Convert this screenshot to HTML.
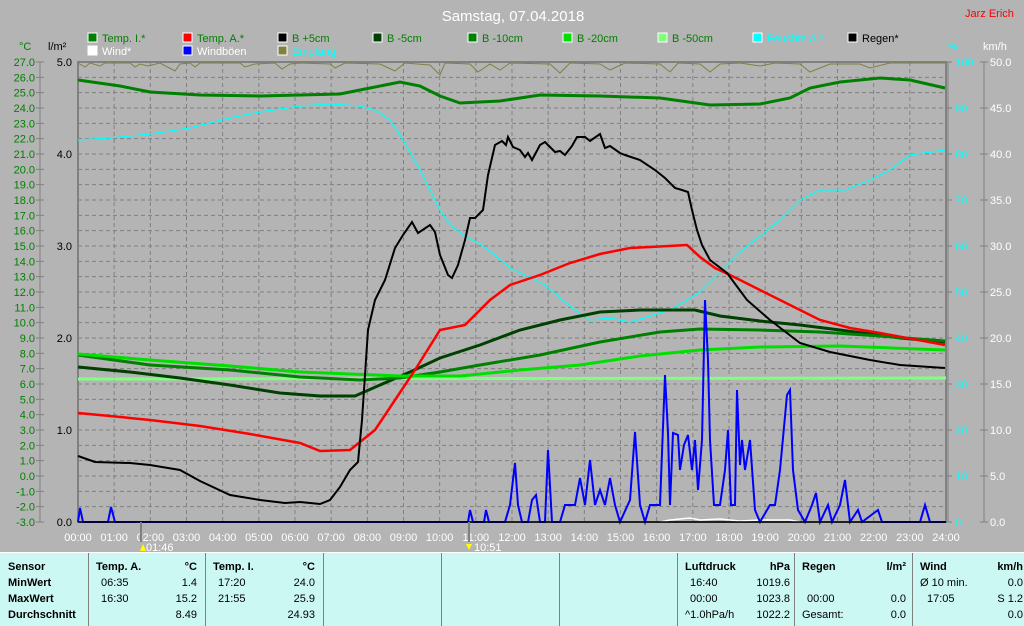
<!DOCTYPE html>
<html><head><meta charset="utf-8"><style>
html,body{margin:0;padding:0;background:#b4b4b4;width:1024px;height:625px;overflow:hidden;font-family:"Liberation Sans",sans-serif}
svg{position:absolute;left:0;top:0}
.tb{position:absolute;left:0;top:552px;width:1024px;height:73px;background:#ccf8f4;border-top:1px solid #fff}
.c{position:absolute;top:0;height:73px;border-left:1px solid #808080;font-size:11px;color:#000}
.r{position:absolute;white-space:nowrap}
b{font-weight:bold}
</style></head><body>
<svg width="1024" height="552" font-family="Liberation Sans, sans-serif" font-size="11">
<text x="513" y="21" fill="#fff" font-size="15" text-anchor="middle">Samstag, 07.04.2018</text>
<text x="965" y="17" fill="#f00" font-size="11">Jarz Erich</text>
<g font-size="11">
<rect x="88" y="33" width="9" height="9" fill="#008000" stroke="#fff"/><text x="102" y="42" fill="#008000">Temp. I.*</text>
<rect x="183" y="33" width="9" height="9" fill="#f00" stroke="#fff"/><text x="197" y="42" fill="#008000">Temp. A.*</text>
<rect x="278" y="33" width="9" height="9" fill="#000" stroke="#fff"/><text x="292" y="42" fill="#008000">B +5cm</text>
<rect x="373" y="33" width="9" height="9" fill="#004000" stroke="#fff"/><text x="387" y="42" fill="#008000">B -5cm</text>
<rect x="468" y="33" width="9" height="9" fill="#008000" stroke="#fff"/><text x="482" y="42" fill="#008000">B -10cm</text>
<rect x="563" y="33" width="9" height="9" fill="#00e000" stroke="#fff"/><text x="577" y="42" fill="#008000">B -20cm</text>
<rect x="658" y="33" width="9" height="9" fill="#80ff80" stroke="#fff"/><text x="672" y="42" fill="#008000">B -50cm</text>
<rect x="753" y="33" width="9" height="9" fill="#0ff" stroke="#fff"/><text x="767" y="42" fill="#0ff">Feuchte A.*</text>
<rect x="848" y="33" width="9" height="9" fill="#000" stroke="#fff"/><text x="862" y="42" fill="#000">Regen*</text>
<rect x="88" y="46" width="9" height="9" fill="#fff" stroke="#fff"/><text x="102" y="55" fill="#fff">Wind*</text>
<rect x="183" y="46" width="9" height="9" fill="#00f" stroke="#fff"/><text x="197" y="55" fill="#fff">Windböen</text>
<rect x="278" y="46" width="9" height="9" fill="#808040" stroke="#fff"/><text x="292" y="55" fill="#0ff">Empfang</text>
</g>
<text x="19" y="50" fill="#008000">°C</text>
<text x="48" y="50" fill="#000">l/m²</text>
<text x="948" y="50" fill="#0ff">%</text>
<text x="983" y="50" fill="#fff">km/h</text>
<line x1="40" y1="62" x2="40" y2="522" stroke="#808080"/>
<g fill="#008000" text-anchor="end" id="cl"></g>
<g stroke="#808080" stroke-dasharray="4,3" id="grid"></g>
<rect x="78" y="62" width="868" height="460" fill="none" stroke="#808080" stroke-width="2"/>
<line x1="948" y1="62" x2="948" y2="522" stroke="#808080"/>
<line x1="984" y1="62" x2="984" y2="522" stroke="#808080"/>
<g id="rl" font-size="11"></g>
<polyline fill="none" stroke="#808040" stroke-width="1" points="78,63 85,67 90,63 100,66 105,63 130,63 135,67 140,64 148,66 160,63 175,71 180,64 190,63 195,67 200,63 240,63 245,67 255,64 275,63 282,69 290,64 300,63 330,64 335,68 345,63 380,64 395,71 405,63 430,65 440,75 445,63 470,64 478,72 490,64 500,70 510,63 550,64 560,73 570,63 600,64 610,70 625,63 660,64 670,72 678,63 700,64 710,72 720,64 740,63 760,66 775,63 800,64 810,72 830,64 860,64 870,68 890,63 946,63"/>
<polyline fill="none" stroke="#80ff80" stroke-width="3" points="78,379 946,378"/>
<polyline fill="none" stroke="#0ff" stroke-width="1.2" points="78,140 110,138 150,134 190,128 230,118 260,112 300,106 330,104 360,106 375,110 390,120 400,135 410,152 420,170 430,190 440,210 450,225 465,236 480,244 495,255 510,268 525,275 545,285 560,298 575,310 590,320 610,318 630,322 650,316 670,310 687,300 700,292 720,272 740,252 760,236 780,220 800,200 820,190 845,190 870,180 890,170 910,155 945,150"/>
<polyline fill="none" stroke="#004000" stroke-width="3" points="78,367 130,372 180,378 230,385 280,393 320,396 355,396 380,385 410,372 440,358 480,345 520,330 560,320 600,312 640,310 695,310 720,316 760,321 800,325 840,330 900,338 945,342"/>
<polyline fill="none" stroke="#008000" stroke-width="3" points="78,355 150,365 230,370 300,377 360,380 400,378 440,372 480,365 540,355 600,342 660,332 700,329 760,330 820,332 880,336 945,341"/>
<polyline fill="none" stroke="#00e000" stroke-width="3" points="78,354 150,360 230,366 300,372 400,376 460,376 520,370 580,365 640,356 700,350 760,347 840,346 945,350"/>
<polyline fill="none" stroke="#008000" stroke-width="3" points="78,80 120,86 150,92 200,95 260,96 340,94 370,88 400,82 420,86 440,96 460,103 500,101 540,95 600,96 660,98 710,105 760,104 790,98 810,88 840,82 880,78 910,80 945,88"/>
<polyline fill="none" stroke="#f00" stroke-width="2.5" points="78,413 110,416 150,420 200,426 250,434 300,443 320,451 350,450 375,430 395,400 415,370 440,330 465,325 490,300 510,285 540,275 570,263 600,254 630,248 650,247 687,245 700,257 715,268 730,275 760,290 790,305 820,320 850,328 880,333 945,345"/>
<polyline fill="none" stroke="#000" stroke-width="2" points="78,456 95,462 130,463 150,465 180,470 200,481 230,495 260,500 285,503 300,502 320,504 330,500 340,487 350,470 358,462 362,420 368,330 375,300 385,280 395,248 403,235 412,222 418,233 430,225 435,232 440,255 448,275 452,278 458,265 465,240 470,218 475,218 483,210 488,175 495,145 502,141 506,145 508,137 513,147 520,150 525,157 528,153 532,160 540,145 545,142 550,147 555,152 560,151 565,155 572,146 577,137 585,137 590,141 600,134 605,148 610,146 620,153 625,155 640,160 655,170 665,178 675,188 682,190 688,192 692,210 697,230 702,245 710,260 727,273 747,300 770,320 800,343 830,352 870,360 900,365 945,368"/>
<polyline fill="none" stroke="#fff" stroke-width="1.5" points="660,522 670,520 680,519 690,518 700,520 720,519 740,521 760,520 790,520 800,522"/>
<polyline fill="none" stroke="#00f" stroke-width="2" points="78,522 80,508 83,522 108,522 111,507 115,522 468,522 470,510 473,522 484,522 486,510 489,522 505,522 510,505 515,463 518,505 522,522 528,522 532,500 536,495 540,522 545,522 548,450 552,522 560,522 565,505 575,505 580,478 585,505 590,460 595,505 600,490 605,505 610,478 615,505 620,522 630,500 635,432 640,505 645,522 650,505 660,505 665,375 668,433 670,505 673,433 678,435 680,470 684,445 688,435 692,470 695,440 698,490 702,440 705,300 708,360 710,440 714,505 720,505 725,470 728,430 731,505 735,505 737,390 740,465 742,440 745,470 750,440 755,510 760,522 770,505 775,505 780,470 787,395 790,390 793,470 798,510 805,522 812,505 816,493 820,522 828,505 832,522 840,505 845,480 850,522 858,510 862,522 878,510 882,522 920,522 925,505 930,522 946,522"/>
<line x1="78" y1="522" x2="946" y2="522" stroke="#000" stroke-width="1.5"/>
<g fill="#fff" text-anchor="middle" id="hl"></g>
<line x1="141" y1="522" x2="141" y2="542" stroke="#808080" stroke-width="2"/>
<line x1="469" y1="522" x2="469" y2="542" stroke="#808080" stroke-width="2"/>
<text x="146" y="551" fill="#fff" font-size="11">01:46</text>
<text x="474" y="551" fill="#fff" font-size="11">10:51</text>
<polygon points="140,551 143,544 146,551" fill="#ff0"/>
<polygon points="466,544 472,544 469,550" fill="#ff0"/>
</svg>
<div class="tb">
<div class="c" style="left:0;border-left:none"><div class="r" style="left:8px;top:8px"><b>Sensor</b></div><div class="r" style="left:8px;top:24px"><b>MinWert</b></div><div class="r" style="left:8px;top:40px"><b>MaxWert</b></div><div class="r" style="left:8px;top:56px"><b>Durchschnitt</b></div></div>
<div class="c" style="left:88px;width:116px"><div class="r" style="left:7px;top:8px"><b>Temp. A.</b></div><div class="r" style="right:8px;top:8px"><b>°C</b></div><div class="r" style="left:12px;top:24px">06:35</div><div class="r" style="right:8px;top:24px">1.4</div><div class="r" style="left:12px;top:40px">16:30</div><div class="r" style="right:8px;top:40px">15.2</div><div class="r" style="right:8px;top:56px">8.49</div></div>
<div class="c" style="left:205px;width:117px"><div class="r" style="left:7px;top:8px"><b>Temp. I.</b></div><div class="r" style="right:8px;top:8px"><b>°C</b></div><div class="r" style="left:12px;top:24px">17:20</div><div class="r" style="right:8px;top:24px">24.0</div><div class="r" style="left:12px;top:40px">21:55</div><div class="r" style="right:8px;top:40px">25.9</div><div class="r" style="right:8px;top:56px">24.93</div></div>
<div class="c" style="left:323px;width:117px"></div>
<div class="c" style="left:441px;width:117px"></div>
<div class="c" style="left:559px;width:117px"></div>
<div class="c" style="left:677px;width:116px"><div class="r" style="left:7px;top:8px"><b>Luftdruck</b></div><div class="r" style="right:4px;top:8px"><b>hPa</b></div><div class="r" style="left:12px;top:24px">16:40</div><div class="r" style="right:4px;top:24px">1019.6</div><div class="r" style="left:12px;top:40px">00:00</div><div class="r" style="right:4px;top:40px">1023.8</div><div class="r" style="left:7px;top:56px">^1.0hPa/h</div><div class="r" style="right:4px;top:56px">1022.2</div></div>
<div class="c" style="left:794px;width:117px"><div class="r" style="left:7px;top:8px"><b>Regen</b></div><div class="r" style="right:6px;top:8px"><b>l/m²</b></div><div class="r" style="left:12px;top:40px">00:00</div><div class="r" style="right:6px;top:40px">0.0</div><div class="r" style="left:7px;top:56px">Gesamt:</div><div class="r" style="right:6px;top:56px">0.0</div></div>
<div class="c" style="left:912px;width:112px"><div class="r" style="left:7px;top:8px"><b>Wind</b></div><div class="r" style="right:2px;top:8px"><b>km/h</b></div><div class="r" style="left:7px;top:24px">Ø 10 min.</div><div class="r" style="right:2px;top:24px">0.0</div><div class="r" style="left:14px;top:40px">17:05</div><div class="r" style="right:2px;top:40px">S 1.2</div><div class="r" style="right:2px;top:56px">0.0</div></div>
</div>
<script>
var NS="http://www.w3.org/2000/svg";
function el(p,t,a,txt){var e=document.createElementNS(NS,t);for(var k in a)e.setAttribute(k,a[k]);if(txt!==undefined)e.textContent=txt;p.appendChild(e);return e;}
var cl=document.getElementById('cl'),g=document.getElementById('grid'),rl=document.getElementById('rl'),hl=document.getElementById('hl');
for(var i=0;i<=30;i++){var y=62+i*460/30;el(cl,'text',{x:35,y:y+4},(27-i).toFixed(1));el(cl.parentNode,'line',{x1:36,y1:y,x2:44,y2:y,stroke:'#808080'});if(i>0&&i<30)el(g,'line',{x1:78,y1:y,x2:946,y2:y});}
for(var h=1;h<24;h++){var x=78+h*868/24;el(g,'line',{x1:x,y1:62,x2:x,y2:522});}
for(var h=0;h<=24;h++){var x=78+h*868/24;el(hl,'text',{x:x,y:541},(h<10?'0':'')+h+':00');}
for(var i=0;i<=5;i++){var y=62+i*92;el(rl,'text',{x:72,y:y+4,fill:'#000','text-anchor':'end'},(5-i).toFixed(1));}
for(var i=0;i<=10;i++){var y=62+i*46;el(rl,'text',{x:955,y:y+4,fill:'#0ff'},String(100-i*10));el(rl,'line',{x1:980,y1:y,x2:988,y2:y,stroke:'#808080'});el(rl,'text',{x:990,y:y+4,fill:'#fff'},(50-i*5).toFixed(1));el(rl,'line',{x1:946,y1:y,x2:952,y2:y,stroke:'#808080'});}
</script>
</body></html>
